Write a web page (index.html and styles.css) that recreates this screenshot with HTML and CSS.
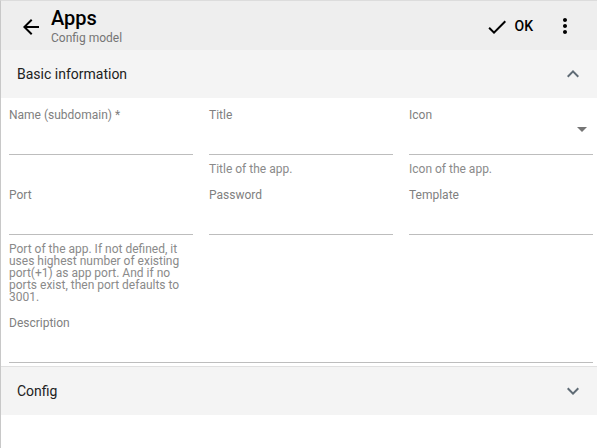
FILE: index.html
```html
<!DOCTYPE html>
<html>
<head>
<meta charset="utf-8">
<link rel="stylesheet" href="styles.css">
</head>
<body>
<div class="frame">
  <header class="appbar">
    <button class="icon-btn back" aria-label="Back">
      <svg viewBox="0 0 24 24" width="24" height="24"><path d="M20 11H7.83l5.59-5.59L12 4l-8 8 8 8 1.41-1.41L7.83 13H20v-2z" fill="#000"/></svg>
    </button>
    <div class="titles">
      <div class="title">Apps</div>
      <div class="subtitle">Config model</div>
    </div>
    <div class="actions">
      <button class="ok-btn">
        <svg viewBox="0 0 24 24" width="24" height="24"><path d="M9 16.17L4.83 12l-1.42 1.41L9 19 21 7l-1.41-1.41z" fill="#000"/></svg>
        <span>OK</span>
      </button>
      <button class="icon-btn more" aria-label="More">
        <svg viewBox="0 0 24 24" width="24" height="24"><path d="M12 8c1.1 0 2-.9 2-2s-.9-2-2-2-2 .9-2 2 .9 2 2 2zm0 2c-1.1 0-2 .9-2 2s.9 2 2 2 2-.9 2-2-.9-2-2-2zm0 6c-1.1 0-2 .9-2 2s.9 2 2 2 2-.9 2-2-.9-2-2-2z" fill="#000"/></svg>
      </button>
    </div>
  </header>

  <section class="panel">
    <div class="panel-head">
      <span>Basic information</span>
      <svg class="chev" viewBox="0 0 24 24" width="24" height="24"><path d="M12 8l-6 6 1.41 1.41L12 10.83l4.59 4.58L18 14z" fill="#5f6b75"/></svg>
    </div>
    <div class="form">
      <div class="field">
        <label>Name (subdomain) *</label>
        <div class="input"></div>
      </div>
      <div class="field">
        <label>Title</label>
        <div class="input"></div>
        <div class="helper">Title of the app.</div>
      </div>
      <div class="field">
        <label>Icon</label>
        <div class="input select"><span class="caret"></span></div>
        <div class="helper">Icon of the app.</div>
      </div>
      <div class="field">
        <label>Port</label>
        <div class="input"></div>
        <div class="helper">Port of the app. If not defined, it uses highest number of existing port(+1) as app port. And if no ports exist, then port defaults to 3001.</div>
      </div>
      <div class="field">
        <label>Password</label>
        <div class="input"></div>
      </div>
      <div class="field">
        <label>Template</label>
        <div class="input"></div>
      </div>
      <div class="field full">
        <label>Description</label>
        <div class="input"></div>
      </div>
    </div>
  </section>

  <section class="panel collapsed">
    <div class="panel-head">
      <span>Config</span>
      <svg class="chev" viewBox="0 0 24 24" width="24" height="24"><path d="M16.59 8.59L12 13.17 7.41 8.59 6 10l6 6 6-6z" fill="#5f6b75"/></svg>
    </div>
  </section>
</div>
</body>
</html>
```

FILE: styles.css
```css
* { box-sizing: border-box; }
html, body { margin: 0; padding: 0; background: #fff; }
body {
  font-family: Roboto, "Noto Sans", "Liberation Sans", sans-serif;
  color: #212121;
  width: 597px;
  height: 448px;
  overflow: hidden;
}
.frame {
  height: 448px;
  border-left: 1px solid #c8c8c8;
  border-top: 1px solid #dcdcdc;
}
button {
  background: none;
  border: 0;
  padding: 0;
  margin: 0;
  font: inherit;
  color: inherit;
  cursor: pointer;
}
.appbar {
  height: 49px;
  background: #eeeeee;
  display: flex;
  align-items: center;
  padding-left: 18px;
}
.icon-btn { width: 24px; height: 24px; display: flex; }
.back { margin-top: 2px; }
.titles {
  margin-left: 8px;
  margin-top: 4px;
  display: flex;
  flex-direction: column;
}
.title {
  font-size: 20px;
  font-weight: 500;
  line-height: 22px;
  color: #000;
  margin-top: -3px;
}
.subtitle {
  font-size: 12px;
  line-height: 14px;
  color: #757575;
  margin-top: 2px;
}
.actions {
  margin-left: auto;
  display: flex;
  align-items: center;
  margin-right: 20px;
}
.ok-btn {
  display: flex;
  align-items: center;
  gap: 6px;
  font-size: 14px;
  font-weight: 500;
  color: #000;
  margin-right: 20px;
}
.ok-btn svg { margin-top: 2px; }
.panel-head {
  height: 48px;
  background: #f4f4f4;
  display: flex;
  align-items: center;
  padding-left: 16px;
  padding-right: 12px;
  font-size: 14px;
  color: #212121;
}
.chev { margin-left: auto; }
.form {
  display: grid;
  grid-template-columns: 184px 184px 184px;
  column-gap: 16px;
  row-gap: 13px;
  padding: 10px 0 3px 8px;
}
.field { display: flex; flex-direction: column; }
.field.full { grid-column: 1 / -1; }
.field label {
  font-size: 12px;
  line-height: 14px;
  color: #808080;
}
.input {
  height: 33px;
  border-bottom: 1px solid #bdbdbd;
  position: relative;
}
.caret {
  position: absolute;
  right: 6px;
  top: 5px;
  width: 0;
  height: 0;
  border-left: 5px solid transparent;
  border-right: 5px solid transparent;
  border-top: 5px solid #757575;
}
.helper {
  font-size: 12px;
  line-height: 12px;
  color: #8a8a8a;
  margin-top: 8px;
}
.collapsed { border-top: 1px solid #e0e0e0; }
```
